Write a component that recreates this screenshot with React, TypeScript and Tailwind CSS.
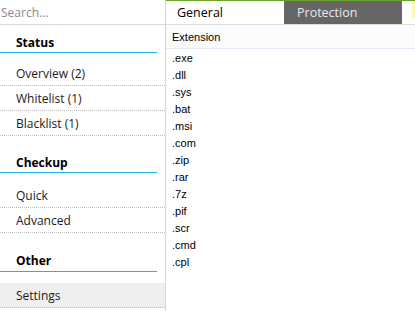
const sections = [
  { title: 'Status', items: ['Overview (2)', 'Whitelist (1)', 'Blacklist (1)'], head: 'mt-0', list: 'mt-[8px]', pb: 'pb-[1px]' },
  { title: 'Checkup', items: ['Quick', 'Advanced'], head: 'mt-[9px]', list: 'mt-[10px]', pb: 'pb-[1px]' },
  { title: 'Other', items: ['Settings'], head: 'mt-[10px]', list: 'mt-[11px]', pb: 'pb-[2px]' },
];

const extensions = ['.exe', '.dll', '.sys', '.bat', '.msi', '.com', '.zip', '.rar', '.7z', '.pif', '.scr', '.cmd', '.cpl'];

export default function App() {
  return (
    <div className="flex h-[311px] w-[415px] overflow-hidden bg-white" style={{ fontFamily: '"Open Sans", "Noto Sans", sans-serif' }}>
      {/* Sidebar */}
      <div className="flex w-[166px] shrink-0 flex-col border-r border-[#d6d6d6]">
        <div className="flex h-[25px] items-center border-b border-[#dadada] pl-[1px] pt-[1px] text-[12px] text-[#8a8a8a]">
          Search...
        </div>
        {sections.map((s) => (
          <div key={s.title}>
            <div className={`${s.head} mr-[8px] border-b border-[#1fb6e3] pt-[10px] ${s.pb} pl-[16px] text-[12px] leading-[16px] font-bold text-black`}>
              {s.title}
            </div>
            <div className={s.list}>
              {s.items.map((item) => (
                <div
                  key={item}
                  className={`flex h-[25px] items-center border-b border-dotted border-[#bdbdbd] pl-[16px] pt-[2px] text-[12px] text-[#1b1b1b] ${item === 'Settings' ? 'bg-[#efefef]' : ''}`}
                >
                  {item}
                </div>
              ))}
            </div>
          </div>
        ))}
      </div>

      {/* Main pane */}
      <div className="flex flex-1 flex-col">
        <div className="flex h-[25px] border-t border-b border-t-[#6aa424] border-b-[#dedede]">
          <div className="flex w-[118px] items-center pl-[11px] pt-[1px] text-[12.5px] text-black">General</div>
          <div className="flex w-[118px] items-center bg-[#666666] pl-[13px] pt-[1px] text-[12.5px] text-[#e8e8e8]">Protection</div>
          <div className="flex flex-1 justify-end">
            <div className="h-[17px] w-[3px] bg-[#fff5b3]" />
          </div>
        </div>
        <div
          className="flex h-[24px] items-center border-b border-[#dfe8f6] bg-[#fbfbfb] pl-[6px] pt-[1px] text-[11px] text-black"
          style={{ fontFamily: '"Liberation Sans", Arial, sans-serif' }}
        >
          Extension
        </div>
        <div className="flex flex-col" style={{ fontFamily: '"Liberation Sans", Arial, sans-serif' }}>
          {extensions.map((ext) => (
            <div key={ext} className="flex h-[17px] items-center pl-[6px] pt-[1px] text-[11px] text-black">
              {ext}
            </div>
          ))}
        </div>
      </div>
    </div>
  );
}
